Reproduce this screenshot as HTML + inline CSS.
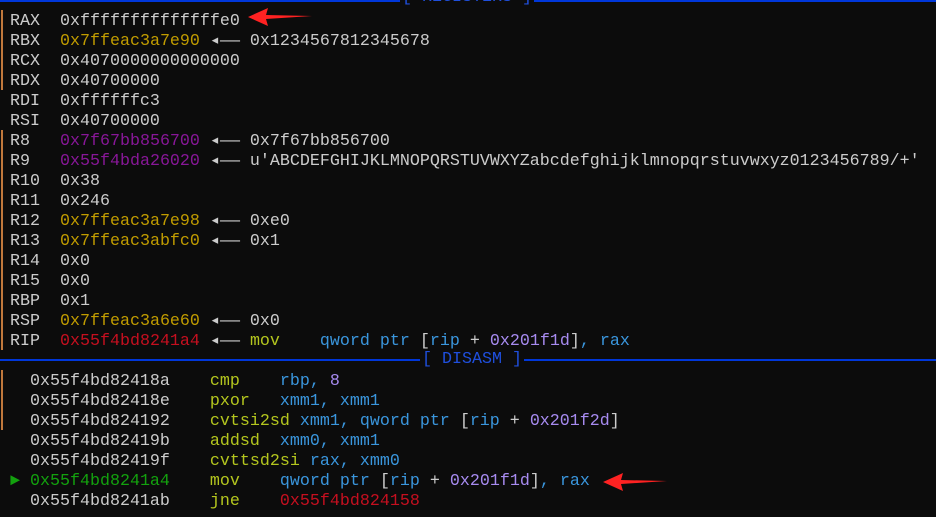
<!DOCTYPE html>
<html><head><meta charset="utf-8"><style>
html,body{margin:0;padding:0;background:#0c0c0c;width:936px;height:517px;overflow:hidden}
.l{position:absolute;left:0;height:20px;line-height:20px;white-space:pre;font-family:"Liberation Mono","DejaVu Sans Mono",monospace;font-size:16.67px;color:#cccccc}
.y{color:#c19c00}.p{color:#881798}.r{color:#c50f1f}.g{color:#13a10e}.c{color:#3a96dd}.m{color:#b4c61e}.n{color:#a78bf0}.b{color:#1f4fdd}
.hr{position:absolute;left:0;width:936px;height:2px;background:#0037da}
.bar{position:absolute;left:1px;width:2px;background:#c0783c}
</style></head><body>
<div class="hr" style="top:0"></div>
<div class="l b" style="top:-12px;left:400px;background:#0c0c0c;padding:0 2px">[ REGISTERS ]</div>
<div class="bar" style="top:10px;height:80px"></div>
<div class="bar" style="top:130px;height:220px"></div>
<div class="l" style="top:12px"> RAX  0xffffffffffffffe0</div>
<div class="l" style="top:32px"> RBX  <span class="y">0x7ffeac3a7e90</span> ◂—— 0x1234567812345678</div>
<div class="l" style="top:52px"> RCX  0x4070000000000000</div>
<div class="l" style="top:72px"> RDX  0x40700000</div>
<div class="l" style="top:92px"> RDI  0xffffffc3</div>
<div class="l" style="top:112px"> RSI  0x40700000</div>
<div class="l" style="top:132px"> R8   <span class="p">0x7f67bb856700</span> ◂—— 0x7f67bb856700</div>
<div class="l" style="top:152px"> R9   <span class="p">0x55f4bda26020</span> ◂—— u'ABCDEFGHIJKLMNOPQRSTUVWXYZabcdefghijklmnopqrstuvwxyz0123456789/+'</div>
<div class="l" style="top:172px"> R10  0x38</div>
<div class="l" style="top:192px"> R11  0x246</div>
<div class="l" style="top:212px"> R12  <span class="y">0x7ffeac3a7e98</span> ◂—— 0xe0</div>
<div class="l" style="top:232px"> R13  <span class="y">0x7ffeac3abfc0</span> ◂—— 0x1</div>
<div class="l" style="top:252px"> R14  0x0</div>
<div class="l" style="top:272px"> R15  0x0</div>
<div class="l" style="top:292px"> RBP  0x1</div>
<div class="l" style="top:312px"> RSP  <span class="y">0x7ffeac3a6e60</span> ◂—— 0x0</div>
<div class="l" style="top:332px"> RIP  <span class="r">0x55f4bd8241a4</span> ◂—— <span class="m">mov</span>    <span class="c">qword ptr </span>[<span class="c">rip</span> + <span class="n">0x201f1d</span>]<span class="c">, rax</span></div>
<div class="hr" style="top:359px"></div>
<div class="l b" style="top:350px;left:420px;background:#0c0c0c;padding:0 2px">[ DISASM ]</div>
<div class="bar" style="top:370px;height:60px"></div>
<div class="l" style="top:372px">   0x55f4bd82418a    <span class="m">cmp</span>    <span class="c">rbp, </span><span class="n">8</span></div>
<div class="l" style="top:392px">   0x55f4bd82418e    <span class="m">pxor</span>   <span class="c">xmm1, xmm1</span></div>
<div class="l" style="top:412px">   0x55f4bd824192    <span class="m">cvtsi2sd</span> <span class="c">xmm1, qword ptr </span>[<span class="c">rip</span> + <span class="n">0x201f2d</span>]</div>
<div class="l" style="top:432px">   0x55f4bd82419b    <span class="m">addsd</span>  <span class="c">xmm0, xmm1</span></div>
<div class="l" style="top:452px">   0x55f4bd82419f    <span class="m">cvttsd2si</span> <span class="c">rax, xmm0</span></div>
<div class="l" style="top:472px"> <span class="g">► 0x55f4bd8241a4</span>    <span class="m">mov</span>    <span class="c">qword ptr </span>[<span class="c">rip</span> + <span class="n">0x201f1d</span>]<span class="c">, rax</span></div>
<div class="l" style="top:492px">   0x55f4bd8241ab    <span class="m">jne</span>    <span class="r">0x55f4bd824158</span></div>
<svg style="position:absolute;left:0;top:0" width="936" height="517">
<polygon points="248,17 268,8 266,15 312,16 266,19 268,26" fill="#f22"/>
<polygon points="603,482 623,473 621,480 667,481 621,484 623,491" fill="#f22"/>
</svg>
</body></html>
